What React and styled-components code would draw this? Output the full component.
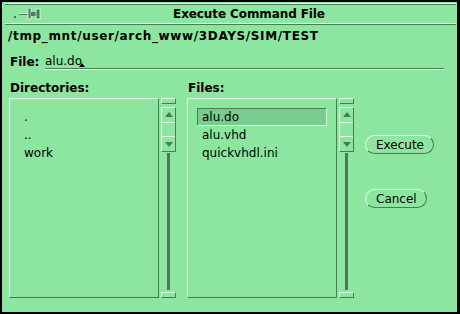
import styled, { createGlobalStyle } from "styled-components";

const C = {
  bg: "#8ce6a0",
  dark: "#4a7a59",
  light: "#e2ffe8",
  sel: "#79cc8d",
};

const GlobalStyle = createGlobalStyle`
  html, body { margin: 0; padding: 0; background: #000; }
  body { font-family: "DejaVu Sans", "Liberation Sans", sans-serif; }
`;

const Window = styled.div`
  box-sizing: border-box;
  width: 460px;
  height: 314px;
  border: solid #000;
  border-width: 2px 3px 2px 2px;
  background: ${C.bg};
  color: #000;
  font-size: 12px;
  line-height: 14px;
  display: flex;
  flex-direction: column;
`;

const TitleBar = styled.div`
  padding: 1px 1px 0 3px;
`;

const Groove = styled.div`
  height: 0;
  border-top: 1px solid ${C.light};
  border-bottom: 1px solid ${C.dark};
`;

const TitleRow = styled.div`
  display: flex;
  align-items: center;
  height: 18px;
`;

const PinBox = styled.div`
  width: 37px;
  padding-left: 9px;
  box-sizing: border-box;
  display: flex;
  align-items: center;
`;

const Title = styled.div`
  flex: 1;
  text-align: center;
  font-weight: bold;
  letter-spacing: -0.1px;
`;

const PathLine = styled.div`
  margin-top: 4px;
  padding-left: 6px;
  font-weight: bold;
  letter-spacing: 0.65px;
`;

const FileRow = styled.div`
  display: flex;
  align-items: flex-end;
  margin-top: 11px;
  padding-left: 8px;
  margin-right: 13px;
`;

const Label = styled.span`
  font-weight: bold;
  width: 35px;
  flex: none;
`;

const Field = styled.div`
  flex: 1;
  border-bottom: 1px solid ${C.dark};
  box-shadow: 0 1px 0 ${C.light};
  height: 14px;
`;

const Caret = styled.span`
  position: relative;
  display: inline-block;
  width: 0;
  &::after {
    content: "";
    position: absolute;
    left: -3px;
    top: -2px;
    border-left: 3px solid transparent;
    border-right: 3px solid transparent;
    border-bottom: 4px solid #000;
  }
`;

const Content = styled.div`
  display: grid;
  grid-template-columns: 167px 167px auto;
  column-gap: 11px;
  margin-top: 12px;
  padding-left: 7px;
`;

const Column = styled.div`
  display: flex;
  flex-direction: column;
`;

const Heading = styled.div`
  font-weight: bold;
  padding-left: 1px;
  height: 17px;
`;

const Panel = styled.div`
  display: flex;
  gap: 2px;
  height: 200px;
`;

const ListBox = styled.div`
  box-sizing: border-box;
  width: 150px;
  height: 200px;
  border: 1px solid;
  border-color: ${C.light} ${C.dark} ${C.dark} ${C.light};
  padding: 9px 9px;
  display: flex;
  flex-direction: column;
`;

const Item = styled.div`
  box-sizing: border-box;
  height: 18px;
  line-height: 16px;
  padding-left: 4px;
  border: 1px solid;
  border-color: ${(p) =>
    p.$selected ? `${C.dark} ${C.light} ${C.light} ${C.dark}` : "transparent"};
  background: ${(p) => (p.$selected ? C.sel : "transparent")};
`;

const Scroll = styled.div`
  width: 15px;
  display: flex;
  flex-direction: column;
  align-items: center;
`;

const Cap = styled.div`
  box-sizing: border-box;
  width: 15px;
  height: 6px;
  flex: none;
  border: 1px solid;
  border-color: ${C.light} ${C.dark} ${C.dark} ${C.light};
`;

const Elevator = styled.div`
  box-sizing: border-box;
  width: 15px;
  height: 45px;
  margin-top: 3px;
  flex: none;
  border: 1px solid;
  border-color: ${C.light} ${C.dark} ${C.dark} ${C.light};
  display: flex;
  flex-direction: column;
`;

const Segment = styled.div`
  flex: 1;
  display: flex;
  align-items: center;
  justify-content: center;
  & + & {
    border-top: 1px solid ${C.light};
  }
`;

const Arrow = styled.span`
  width: 0;
  height: 0;
  border-left: 4px solid transparent;
  border-right: 4px solid transparent;
  ${(p) =>
    p.$down
      ? `border-top: 5px solid ${C.dark};`
      : `border-bottom: 5px solid ${C.dark};`}
`;

const Cable = styled.div`
  flex: 1;
  width: 3px;
  margin: 1px 0 2px;
  background: ${C.dark};
`;

const Buttons = styled.div`
  display: flex;
  flex-direction: column;
  align-items: flex-start;
  gap: 35px;
  padding-top: 54px;
`;

const Button = styled.button`
  box-sizing: border-box;
  height: 19px;
  padding: 0 9px 0 10px;
  border: 1px solid;
  border-color: ${C.light} ${C.dark} ${C.dark} ${C.light};
  border-radius: 10px;
  background: ${C.bg};
  font: 12px "DejaVu Sans", sans-serif;
  color: #000;
`;

const Pin = () => (
  <svg width="28" height="12" viewBox="0 0 28 12">
    <rect x="0" y="8" width="2" height="2" fill={C.dark} />
    <rect x="5" y="5" width="9" height="1" fill={C.light} />
    <rect x="5" y="6" width="9" height="1" fill={C.dark} />
    <rect x="14" y="0" width="3" height="11" fill={C.dark} stroke={C.light} strokeWidth="0.8" />
    <rect x="17" y="4" width="5" height="4" fill={C.dark} />
    <rect x="22" y="1" width="4" height="10" fill={C.dark} stroke={C.light} strokeWidth="0.8" />
  </svg>
);

const ScrollBar = () => (
  <Scroll>
    <Cap />
    <Elevator>
      <Segment>
        <Arrow />
      </Segment>
      <Segment />
      <Segment>
        <Arrow $down />
      </Segment>
    </Elevator>
    <Cable />
    <Cap />
  </Scroll>
);

const dirs = [".", "..", "work"];
const files = ["alu.do", "alu.vhd", "quickvhdl.ini"];

export default function App() {
  return (
    <>
      <GlobalStyle />
      <Window>
        <TitleBar>
          <Groove />
          <TitleRow>
            <PinBox>
              <Pin />
            </PinBox>
            <Title>Execute Command File</Title>
          </TitleRow>
          <Groove />
        </TitleBar>
        <PathLine>/tmp_mnt/user/arch_www/3DAYS/SIM/TEST</PathLine>
        <FileRow>
          <Label>File:</Label>
          <Field>
            alu.do
            <Caret />
          </Field>
        </FileRow>
        <Content>
          <Column>
            <Heading>Directories:</Heading>
            <Panel>
              <ListBox>
                {dirs.map((d) => (
                  <Item key={d}>{d}</Item>
                ))}
              </ListBox>
              <ScrollBar />
            </Panel>
          </Column>
          <Column>
            <Heading>Files:</Heading>
            <Panel>
              <ListBox>
                {files.map((f, i) => (
                  <Item key={f} $selected={i === 0}>
                    {f}
                  </Item>
                ))}
              </ListBox>
              <ScrollBar />
            </Panel>
          </Column>
          <Buttons>
            <Button>Execute</Button>
            <Button>Cancel</Button>
          </Buttons>
        </Content>
      </Window>
    </>
  );
}
